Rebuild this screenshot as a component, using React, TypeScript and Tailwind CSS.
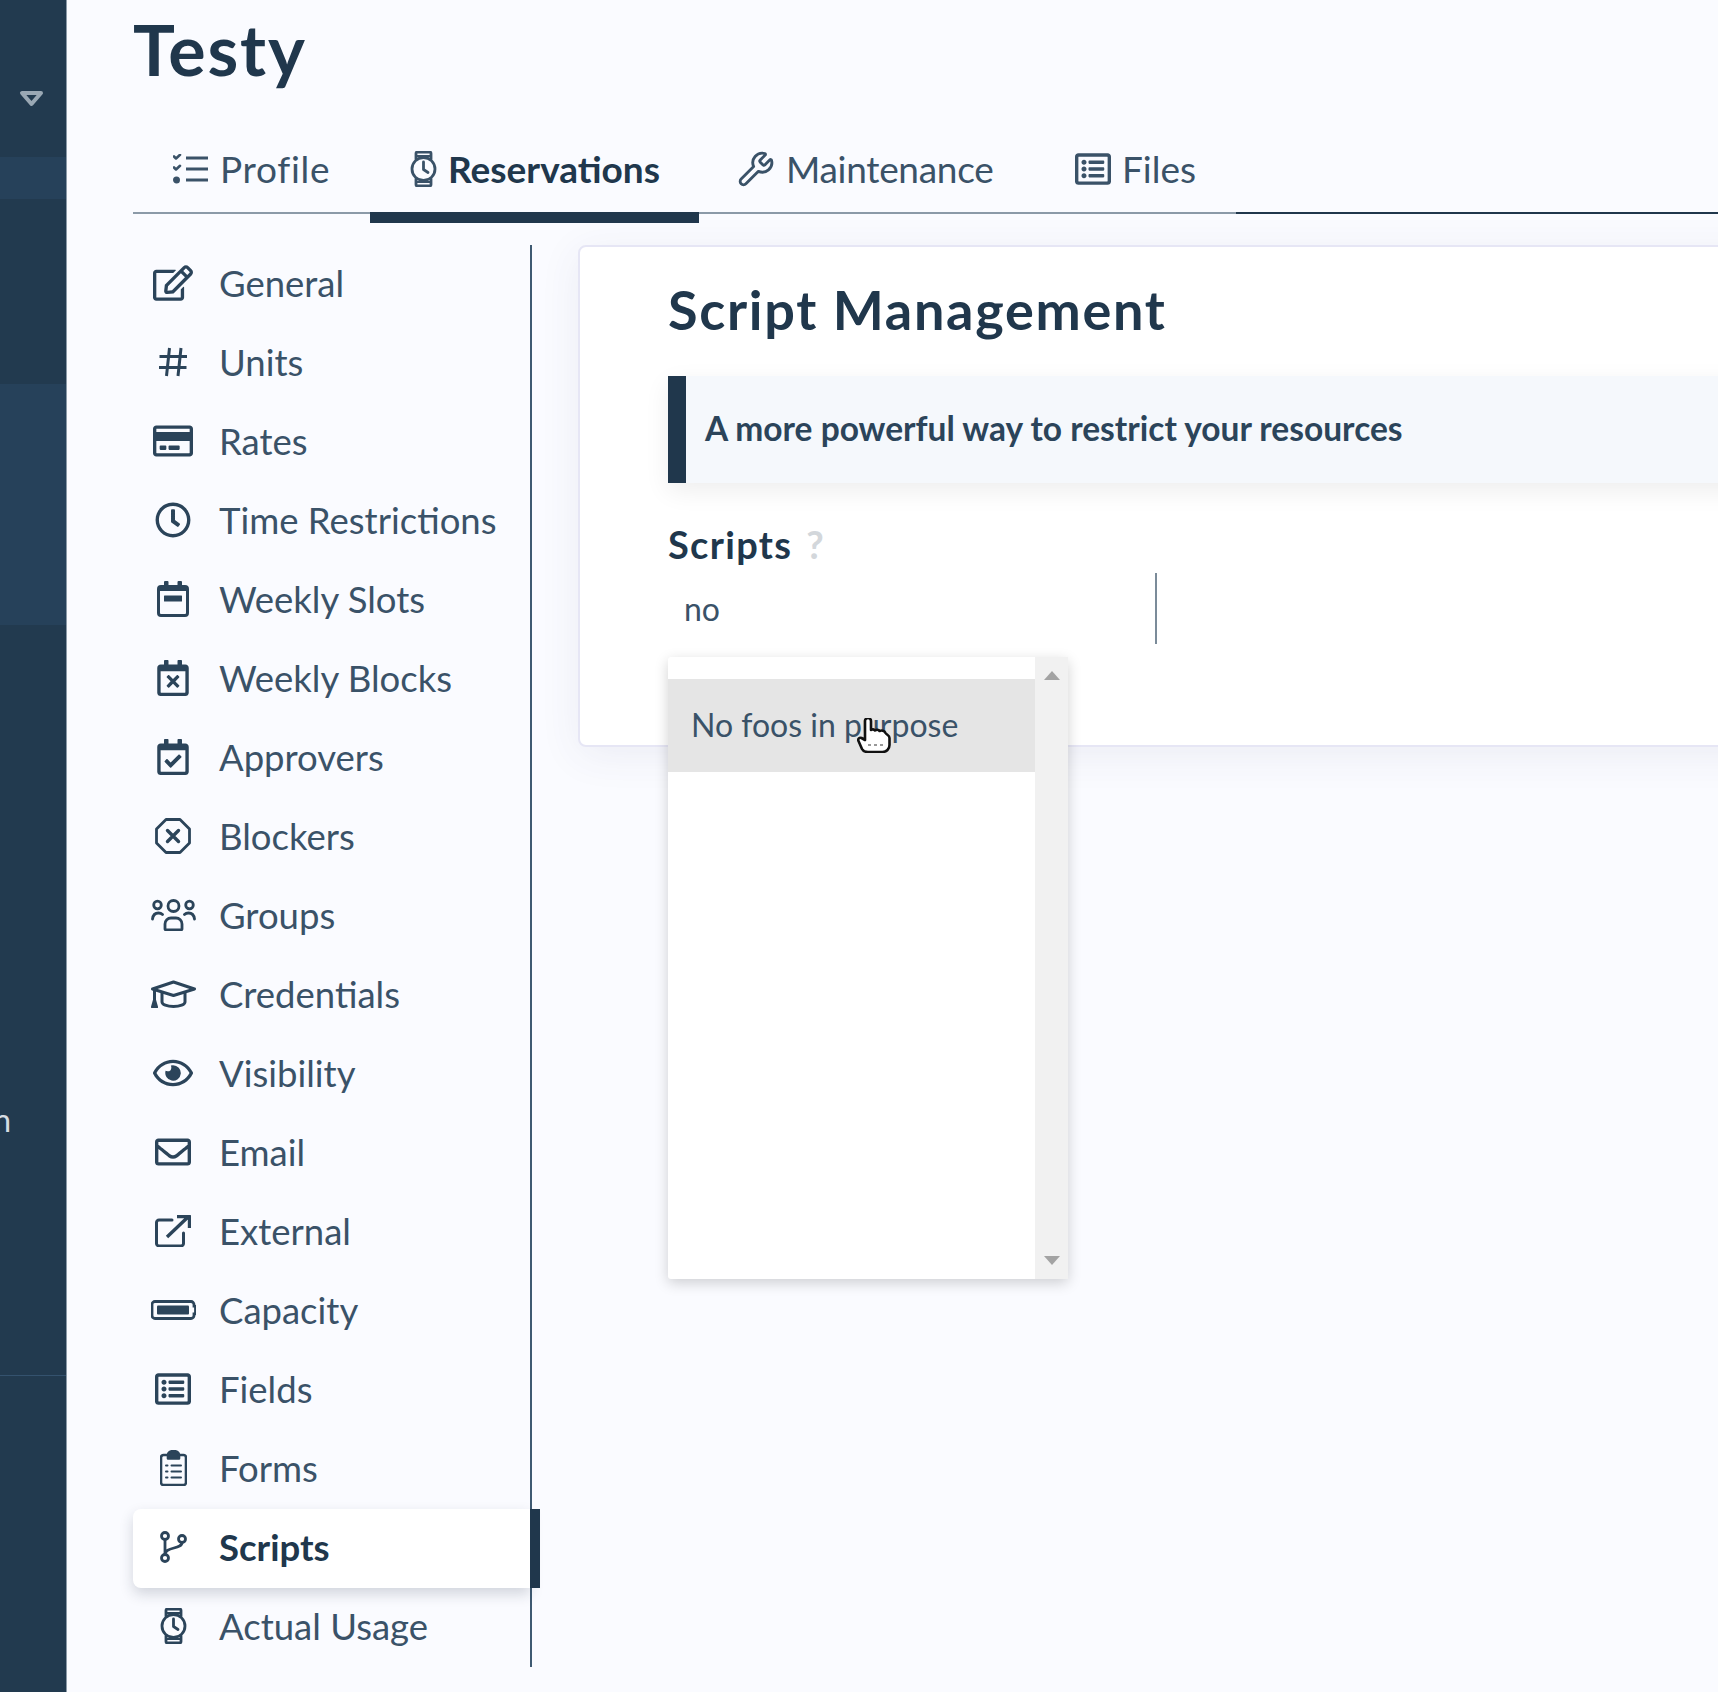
import React from "react";
import {
  FaRegEdit, FaRegCreditCard, FaRegClock, FaRegCalendarTimes,
  FaRegCalendarCheck, FaRegEye, FaRegEnvelope, FaRegListAlt,
} from "react-icons/fa";
import { Wrench } from "lucide-react";

const S = (p: { w: number; h: number; vb: string; children: React.ReactNode; sw?: number }) => (
  <svg width={p.w} height={p.h} viewBox={p.vb} fill="none" stroke="currentColor" strokeWidth={p.sw ?? 2.6} strokeLinecap="round" strokeLinejoin="round">
    {p.children}
  </svg>
);

const Tasks = () => (
  <S w={36} h={30} vb="0 0 36 30">
    <path d="M1 2.500l2 2L7 .8M1 13.500l2 2 4-3.700" />
    <circle cx="3.500" cy="26" r="2.200" fill="currentColor" />
    <path d="M13 4h22M13 15h22M13 26h22" strokeWidth={3} strokeLinecap="butt" />
  </S>
);
const WatchIc = () => (
  <S w={27} h={36} vb="0 0 27 36" sw={2.800}>
    <path d="M6 8V2.500a1.500 1.500 0 0 1 1.500-1.500h12A1.500 1.500 0 0 1 21 2.500V8M6 28v5.500A1.500 1.500 0 0 0 7.500 35h12a1.500 1.500 0 0 0 1.500-1.500V28" />
    <path d="M7 5h13M7 31h13" strokeWidth={2} />
    <circle cx="13.500" cy="18" r="11.500" />
    <path d="M13.500 11v7.500l4.500 3" />
  </S>
);
const Hash = () => (
  <S w={32} h={32} vb="0 0 32 32" sw={3}>
    <path d="M12.500 2l-3 28M24 2l-3 28M2.500 10.500h27.500M2 21.500h27.500" strokeLinecap="butt" />
  </S>
);
const CalBar = () => (
  <svg width={32} height={36} viewBox="0 0 32 36">
    <rect x="1.500" y="5.500" width="29" height="29" rx="2.500" fill="none" stroke="currentColor" strokeWidth="3" />
    <rect x="1.500" y="5" width="29" height="5" fill="currentColor" />
    <rect x="7" y="0" width="4.500" height="7" rx="1" fill="currentColor" />
    <rect x="20.500" y="0" width="4.500" height="7" rx="1" fill="currentColor" />
    <rect x="7" y="14.500" width="18" height="6" rx="0.500" fill="currentColor" />
  </svg>
);
const Octagon = () => (
  <S w={36} h={36} vb="0 0 36 36" sw={2.800}>
    <path d="M11 1.500h14L34.500 11v14L25 34.500H11L1.500 25V11z" />
    <path d="M12.500 12.500l11 11M23.500 12.500l-11 11" strokeWidth={3.400} />
  </S>
);
const Users = () => (
  <S w={45} h={32} vb="0 0 45 32" sw={2.800}>
    <circle cx="22.500" cy="7" r="5.500" />
    <circle cx="6.500" cy="6" r="3.800" />
    <circle cx="38.500" cy="6" r="3.800" />
    <path d="M14 30v-5a6 6 0 0 1 6-6h5a6 6 0 0 1 6 6v5a1.500 1.500 0 0 1-1.500 1H15.500A1.500 1.500 0 0 1 14 30z" />
    <path d="M1.500 20c.5-4 3-6 6-6 1.500 0 3 .5 4 1.500M43.500 20c-.5-4-3-6-6-6-1.500 0-3 .5-4 1.500" />
  </S>
);
const Cap = () => (
  <S w={45} h={28} vb="0 0 45 28" sw={3}>
    <path d="M1.500 9L22.500 2l21 7-21 6.500z" />
    <path d="M11 13v9c0 2.500 5 4.500 11.500 4.500S34 24.500 34 22v-9" />
    <path d="M3.500 10v11" />
    <path d="M1.500 27l2-7 2 7z" fill="currentColor" />
  </S>
);
const Ext = () => (
  <S w={36} h={32} vb="0 0 36 32" sw={3}>
    <path d="M17 5H4a2.500 2.500 0 0 0-2.500 2.500v21A2.500 2.500 0 0 0 4 31h22a2.500 2.500 0 0 0 2.500-2.500V18" />
    <path d="M12 22L33 2M22 1.500h12.500V13" strokeWidth={3.400} strokeLinecap="butt" />
  </S>
);
const Battery = () => (
  <svg width={45} height={20} viewBox="0 0 45 20">
    <path d="M4 1.500h36a3 3 0 0 1 3 3v1.500h.5a1 1 0 0 1 1 1v6a1 1 0 0 1-1 1H43v1.500a3 3 0 0 1-3 3H4a3 3 0 0 1-3-3V4.500a3 3 0 0 1 3-3z" fill="none" stroke="currentColor" strokeWidth="2.800" />
    <rect x="6" y="5.500" width="32" height="9" rx="1" fill="currentColor" />
  </svg>
);
const Clip = () => (
  <S w={27} h={36} vb="0 0 27 36" sw={2.600}>
    <path d="M8 5H3.500A2.500 2.500 0 0 0 1 7.500v25A2.500 2.500 0 0 0 3.500 35h20a2.500 2.500 0 0 0 2.500-2.500v-25A2.500 2.500 0 0 0 23.500 5H19" />
    <path d="M8 8.500V5a5.500 4 0 0 1 11 0v3.500z" fill="currentColor" />
    <path d="M6 15.500h1.500M6 21.500h1.500M6 27.500h1.500M11.500 15.500H21M11.500 21.500H21M11.500 27.500H21" strokeWidth={2} />
  </S>
);
const Branch = () => (
  <S w={27} h={32} vb="0 0 27 32" sw={2.800}>
    <circle cx="5" cy="5" r="3.500" />
    <circle cx="5" cy="27" r="3.500" />
    <circle cx="22" cy="8" r="3.500" />
    <path d="M5 8.500v15M22 11.500c0 7-17 4-17 12" />
  </S>
);

const I = "w-[40px] h-[36px]";
const C = "w-[36px] h-[36px]";
const K = "w-[32px] h-[36px]";

const items: { label: string; icon: React.ReactNode; active?: boolean }[] = [
  { label: "General", icon: <FaRegEdit className={I} /> },
  { label: "Units", icon: <Hash /> },
  { label: "Rates", icon: <FaRegCreditCard className={I} /> },
  { label: "Time Restrictions", icon: <FaRegClock className={C} /> },
  { label: "Weekly Slots", icon: <CalBar /> },
  { label: "Weekly Blocks", icon: <FaRegCalendarTimes className={K} /> },
  { label: "Approvers", icon: <FaRegCalendarCheck className={K} /> },
  { label: "Blockers", icon: <Octagon /> },
  { label: "Groups", icon: <Users /> },
  { label: "Credentials", icon: <Cap /> },
  { label: "Visibility", icon: <FaRegEye className={I} /> },
  { label: "Email", icon: <FaRegEnvelope className={C} /> },
  { label: "External", icon: <Ext /> },
  { label: "Capacity", icon: <Battery /> },
  { label: "Fields", icon: <FaRegListAlt className={C} /> },
  { label: "Forms", icon: <Clip /> },
  { label: "Scripts", icon: <Branch />, active: true },
  { label: "Actual Usage", icon: <WatchIc /> },
];

function Tab({ icon, label, active, width, textClass = "" }: { icon: React.ReactNode; label: string; active?: boolean; width: string; textClass?: string }) {
  return (
    <div className={"relative flex h-[87px] shrink-0 items-center gap-[11px] border-b-2 border-[#8b9aa8] pb-[2px] pl-[40px] " + width}>
      {icon}
      <span className={(active ? "font-bold text-[#20374c] " : "text-[#3a5268] ") + textClass}>{label}</span>
      {active && <div className="absolute left-0 right-0 top-[85px] h-[11px] bg-[#20374c]" />}
    </div>
  );
}

export default function App() {
  return (
    <div className="flex h-[1692px] w-[1718px] overflow-hidden bg-[#fafbff] text-[#3a5268] font-['Lato','Noto_Sans',sans-serif] text-[36.5px]">
      {/* left rail */}
      <div className="flex h-full w-[67px] shrink-0 flex-col border-r border-[#8b9aa8] bg-[#223a4f]">
        <svg className="ml-[19px] mt-[90px] shrink-0" width="25" height="17" viewBox="0 0 25 17">
          <path d="M3 3h19l-9.500 11z" fill="none" stroke="#9aa8b4" strokeWidth="4" strokeLinejoin="round" />
        </svg>
        <div className="mt-[50px] h-[42px] shrink-0 bg-[#26415a]" />
        <div className="mt-[185px] h-[241px] shrink-0 bg-[#26415a]" />
        <div className="mt-[483px] flex h-[24px] w-[11px] shrink-0 items-center justify-end overflow-hidden text-[32px] leading-none text-[#d5dce2]">
          <span className="shrink-0">n</span>
        </div>
        <div className="mt-[243px] h-px shrink-0 bg-[#34526e]" />
      </div>

      {/* main */}
      <div className="flex min-w-0 flex-1 flex-col pl-[66px]">
        <h1 className="h-[127px] pt-[11px] text-[70px] font-bold leading-[76px] tracking-[1.8px] text-[#20374c]">Testy</h1>
        <div className="flex w-[1600px] shrink-0 text-[37px] leading-none">
          <Tab width="w-[237px]" label="Profile" textClass="tracking-[0.7px]" icon={<Tasks />} />
          <Tab width="w-[329px]" label="Reservations" active icon={<WatchIc />} />
          <Tab width="w-[336px]" label="Maintenance" textClass="tracking-[-0.3px]" icon={<Wrench size={38} strokeWidth={1.800} className="-ml-[2px]" />} />
          <Tab width="w-[201px]" label="Files" icon={<FaRegListAlt className={C} />} />
          <div className="flex-1 border-b-2 border-[#20374c]" />
        </div>

        <div className="mt-[31px] flex">
          <nav className="w-[399px] shrink-0 border-r-2 border-[#3f5a72]">
            {items.map((it) => (
              <div
                key={it.label}
                className={
                  "relative flex h-[79px] items-center gap-[22px] pb-[3px] pl-[16px] " +
                  (it.active ? "rounded-l-[8px] bg-white font-bold text-[#20374c] shadow-[0_6px_14px_rgba(30,40,60,0.18)]" : "")
                }
              >
                <span className="flex w-[48px] shrink-0 items-center justify-center text-[#2b445a]">{it.icon}</span>
                <span>{it.label}</span>
                {it.active && <span className="absolute -right-[10px] top-0 h-full w-[10px] bg-[#20374c]" />}
              </div>
            ))}
          </nav>

          <div className="ml-[46px] h-[502px] w-[1300px] shrink-0 rounded-[8px] border-2 border-[#e6e6f5] bg-white pl-[88px] pt-[30px] shadow-[0_8px_40px_rgba(60,70,110,0.08)]">
            <h2 className="text-[54px] font-bold leading-[66px] tracking-[1.7px] text-[#20374c]">Script Management</h2>
            <div className="mt-[33px] flex h-[107px] items-center border-l-[18px] border-[#20374c] bg-[#f5f8fc] pb-[3px] pl-[19px] text-[33.5px] font-bold text-[#2b445a] shadow-[0_8px_24px_rgba(0,0,0,0.07)]">
              A more powerful way to restrict your resources
            </div>
            <div className="mt-[39px] flex items-center gap-[14px] text-[38px] font-bold leading-[44px] tracking-[1.3px] text-[#20374c]">
              Scripts <span className="text-[#d3d7db]">?</span>
            </div>
            <div className="relative mt-[7px] flex h-[71px] w-[489px] items-center border-r-2 border-[#7b8b99] pl-[16px] text-[32px]">
              no
              <div className="absolute left-0 top-[84px] z-10 flex h-[622px] w-[400px] rounded-[3px] bg-white shadow-[0_4px_14px_rgba(0,0,0,0.18)]">
                <div className="flex-1 pt-[22px]">
                  <div className="flex h-[93px] items-center bg-[#e5e5e5] pb-[2px] pl-[23px] text-[#3a5268]">No foos in purpose</div>
                </div>
                <div className="flex w-[33px] flex-col items-center justify-between bg-[#f1f1f1] pb-[14px] pt-[14px]">
                  <svg width="16" height="9" viewBox="0 0 16 9"><path d="M8 0l8 9H0z" fill="#a3a3a3" /></svg>
                  <svg width="16" height="9" viewBox="0 0 16 9"><path d="M0 0h16L8 9z" fill="#a3a3a3" /></svg>
                </div>
                <svg className="absolute left-[189px] top-[61px]" width="36" height="35" viewBox="0 0 36 35">
                  <path d="M8 3a3 3 0 0 1 6 0v9c1.500-1 3-1 4 .500 1.500-1 3.500-1 4.500.500 2-1 5-.5 6 2 1 2 4 2 4 5v7c0 4-3 7-7 7H11c-3 0-5-1-6-3L1.500 23c-1-2 1-4 3-3l3.500 2z" fill="#fff" stroke="#111" strokeWidth="2.600" strokeLinejoin="round" />
                  <path d="M11 27h3M17 27h3M23 27h3" stroke="#777" strokeWidth="1.500" />
                </svg>
              </div>
            </div>
          </div>
        </div>
      </div>
    </div>
  );
}
